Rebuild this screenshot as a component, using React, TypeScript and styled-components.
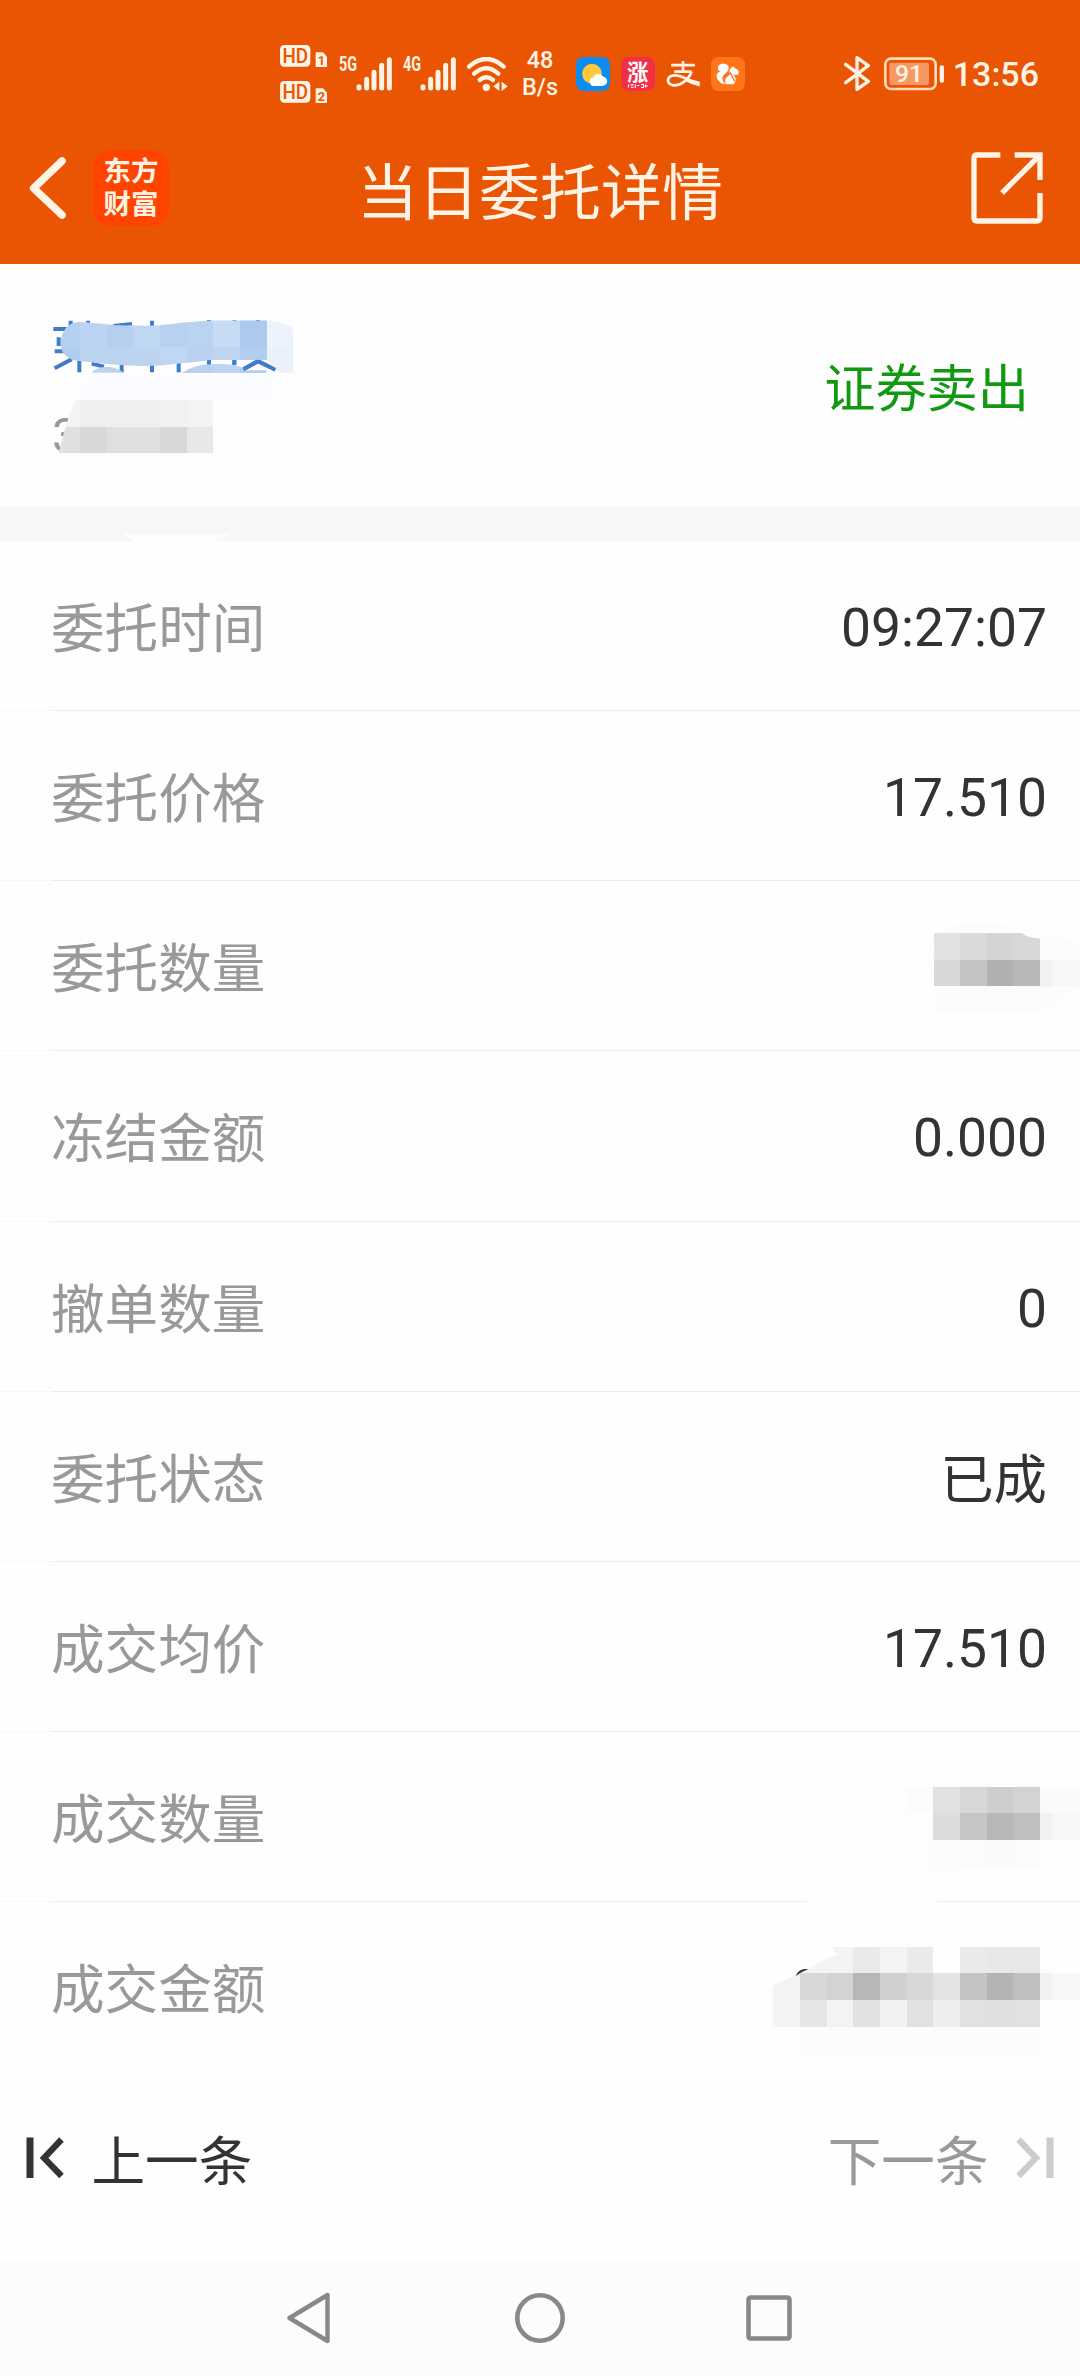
import React from 'react';
import styled, { createGlobalStyle } from 'styled-components';

const ORANGE = '#ea5504';
const CREAM = '#fff3e6';
const PAPER = '#fefefe';
const INK = '#333333';
const MUTED = '#999999';
const FONT = `Roboto, 'Noto Sans CJK SC', sans-serif`;

const GlobalStyle = createGlobalStyle`
  body {
    margin: 0;
    background: ${PAPER};
    font-family: ${FONT};
  }

  svg {
    display: block;
    flex: none;
  }
`;

const Screen = styled.main`
  display: flex;
  flex-direction: column;
  width: 1080px;
  height: 2376px;
  overflow: hidden;
  background: ${PAPER};
`;

const TopArea = styled.header`
  height: 264px;
  background: ${ORANGE};
  color: ${CREAM};
`;

const StatusBar = styled.div`
  display: flex;
  align-items: center;
  box-sizing: border-box;
  height: 112px;
  padding: 35px 41px 0 280px;
`;

const StatusGroup = styled.div<{ $gap: number; $before?: number }>`
  display: flex;
  align-items: center;
  gap: ${(props) => props.$gap}px;
  margin-left: ${(props) => props.$before || 0}px;
`;

const NetSpeed = styled.div`
  width: 36px;
  margin-left: 14px;
  font-size: 23.5px;
  font-weight: 500;
  line-height: 27px;
  text-align: center;
`;

const Clock = styled.div`
  margin-left: auto;
  font-size: 34px;
  font-weight: 500;
  line-height: 34px;
`;

const TitleBar = styled.div`
  display: grid;
  grid-template-columns: 300px 1fr 300px;
  align-items: center;
  height: 152px;
`;

const TitleStart = styled.div`
  display: flex;
  align-items: center;
  gap: 26px;
  padding-left: 29px;
`;

const TitleEnd = styled.div`
  display: flex;
  justify-content: flex-end;
  padding-right: 37px;
`;

const Title = styled.h1`
  margin: 0;
  padding-top: 11px;
  font-size: 61px;
  font-weight: 400;
  line-height: 80px;
  text-align: center;
  white-space: nowrap;
`;

const BrandLogo = styled.div`
  display: flex;
  flex-direction: column;
  justify-content: center;
  width: 76px;
  height: 76px;
  border-radius: 17px;
  background: #ff4400;
  font-size: 27.5px;
  font-weight: 700;
  line-height: 33px;
  text-align: center;
`;

const Summary = styled.section`
  position: relative;
  display: flex;
  justify-content: space-between;
  align-items: center;
  box-sizing: border-box;
  height: 243px;
  padding: 0 51px 0 52px;
`;

const StockCode = styled.div`
  padding-top: 101px;
  color: ${MUTED};
  font-size: 48px;
  line-height: 56px;
`;

const TradeSide = styled.div`
  padding-top: 9px;
  color: #119a11;
  font-size: 51.2px;
  line-height: 70px;
`;

const Band = styled.div`
  height: 34px;
  background: #f6f7f9;
`;

const Row = styled.div`
  position: relative;
  display: flex;
  justify-content: space-between;
  align-items: center;
  box-sizing: border-box;
  height: 170.14px;
  padding: 3px 33px 0 51px;
  background: linear-gradient(to right, #f7f7f7 52px, #ececec 52px) bottom / 100%
    1px no-repeat;

  &:last-child {
    background: none;
  }
`;

const RowLabel = styled.span`
  padding-top: 5px;
  color: ${MUTED};
  font-size: 53.6px;
  line-height: 74px;
`;

const RowValue = styled.span<{ $cjk?: boolean }>`
  padding-top: ${(props) => (props.$cjk ? 6 : 1)}px;
  color: ${INK};
  font-size: 53.4px;
  line-height: 74px;
`;

// masks lie over the text that they hide
const MaskLayer = styled.svg<{ $top: number; $side: 'left' | 'right' }>`
  position: absolute;
  z-index: 1;
  top: ${(props) => props.$top}px;
  ${(props) => props.$side}: 0;
`;

const Pager = styled.div`
  display: flex;
  flex: 1;
  justify-content: space-between;
  align-items: center;
  padding: 0 26px 16px;
`;

const PagerButton = styled.div<{ $disabled?: boolean }>`
  display: flex;
  align-items: center;
  gap: 26.5px;
  color: ${(props) => (props.$disabled ? MUTED : INK)};
  font-size: 53.6px;
  line-height: 74px;

  span {
    padding-top: 9px;
  }
`;

const NavBar = styled.nav`
  display: flex;
  justify-content: center;
  align-items: center;
  gap: 179px;
  height: 116px;
  background: #fcfcfc;
`;

const HdIcon = () => (
  <svg width="48" height="58" viewBox="0 0 144 174">
    {[0, 108].map((y, i) => (
      <g key={y} transform={`translate(0 ${y})`}>
        <rect width="91" height="65" rx="13" fill={CREAM} />
        <text
          x="46"
          y="54"
          fill={ORANGE}
          fontSize="58"
          fontWeight="500"
          textAnchor="middle"
          textLength="77"
          lengthAdjust="spacingAndGlyphs"
        >
          HD
        </text>
        <path d="M107 22h22l12 13v31h-34z" fill={CREAM} />
        <text
          x="124"
          y="61"
          fill={ORANGE}
          fontSize="38"
          fontWeight="700"
          textAnchor="middle"
        >
          {i + 1}
        </text>
      </g>
    ))}
  </svg>
);

const SignalIcon = ({ label }: { label: string }) => (
  <svg width="53" height="46" viewBox="0 -18 159 138">
    <text
      x="0"
      y="43"
      fill={CREAM}
      fontSize="58"
      fontWeight="700"
      textLength="54"
      lengthAdjust="spacingAndGlyphs"
    >
      {label}
    </text>
    <g stroke={CREAM} strokeWidth="15" strokeLinecap="round">
      <path d="M60 89v4M83 67v26M105 46v47M128 25v68M151 8v85" />
    </g>
  </svg>
);

const WifiIcon = () => (
  <svg width="41" height="34" viewBox="0 0 123 102">
    <g fill="none" stroke={CREAM} strokeWidth="13" strokeLinecap="round">
      <path d="M6 29Q58-17 110 29" />
      <path d="M21 50Q58 17 94 50" />
      <path d="M38 69Q58 53 78 69" />
    </g>
    <circle cx="58" cy="91" r="11" fill={CREAM} />
    <path d="M97 74v28L79 88zM104 74v28l18-14z" fill={CREAM} />
  </svg>
);

const WeatherIcon = () => (
  <svg width="34" height="34" viewBox="0 0 100 100">
    <rect width="100" height="100" rx="22" fill="#0d8cf0" />
    <circle cx="47" cy="49" r="29" fill="#ffc83d" />
    <path
      d="M50 85a13 13 0 0 1 0-25 17 17 0 0 1 29-3 14 14 0 0 1-3 28z"
      fill="#fff"
    />
  </svg>
);

const RisingIcon = () => (
  <svg width="34" height="34" viewBox="0 0 100 100">
    <rect width="100" height="100" rx="24" fill="#f22f46" />
    <text
      x="49"
      y="68"
      fill="#fff"
      fontSize="63"
      fontWeight="700"
      textAnchor="middle"
    >
      涨
    </text>
    <path
      d="M22 80v10M28 82h9M29 89h8M42 80v11M47 84h7M59 81h7v9h-7M72 81v9M70 85h9"
      stroke="#fff"
      strokeWidth="3"
      fill="none"
    />
  </svg>
);

const AlipayIcon = () => (
  <svg width="34" height="34" viewBox="0 0 100 100">
    <g fill="none" stroke={CREAM} strokeWidth="8">
      <path d="M15 24H85M50 12V42M24 43H75" />
      <path d="M75 42C68 67 41 86 20 83C-1 79 2 55 25 54C48 53 70 72 98 79" />
    </g>
    <path d="M62 62Q80 69 99 72V87Q76 82 54 69z" fill={CREAM} />
  </svg>
);

const SquirrelIcon = () => (
  <svg width="34" height="34" viewBox="0 0 100 100">
    <rect width="100" height="100" rx="22" fill="#ff7517" />
    <path
      d="M32 79C10 63 14 45 28 43C14 36 20 19 37 19C55 20 57 38 43 48C31 57 30 68 42 79z"
      fill="#fff"
    />
    <path
      d="M59 32L65 27L70 33C82 36 84 46 79 52L66 53C75 61 74 73 67 80H43C38 65 46 56 55 49C53 41 55 37 59 32z"
      fill="#fff"
    />
    <path d="M43 60L57 47L70 72" fill="none" stroke="#ff7517" strokeWidth="4" />
  </svg>
);

const BluetoothIcon = () => (
  <svg width="27" height="35" viewBox="0 0 81 105">
    <path
      d="M5 25L73 76L39 100V5L73 29L5 80"
      fill="none"
      stroke={CREAM}
      strokeWidth="10"
      strokeLinecap="round"
      strokeLinejoin="round"
    />
  </svg>
);

const BatteryIcon = () => (
  <svg width="60" height="34" viewBox="0 0 180 102">
    <rect
      x="4"
      y="5"
      width="151"
      height="91"
      rx="17"
      fill="none"
      stroke="#ffd9b8"
      strokeWidth="8"
    />
    <rect x="16" y="17" width="119" height="67" rx="5" fill="#f69863" />
    <text
      x="75"
      y="75"
      fill={CREAM}
      fontSize="74"
      fontWeight="500"
      textAnchor="middle"
    >
      91
    </text>
    <rect x="167" y="25" width="13" height="52" rx="6" fill={CREAM} />
  </svg>
);

const BackIcon = () => (
  <svg width="38" height="64" viewBox="0 0 114 192">
    <path
      d="M99 15L14 97L99 177"
      fill="none"
      stroke={CREAM}
      strokeWidth="23"
      strokeLinecap="round"
      strokeLinejoin="round"
    />
  </svg>
);

const ShareIcon = () => (
  <svg width="72" height="72" viewBox="0 0 216 216">
    <g fill="none" stroke={CREAM} strokeWidth="16">
      <path d="M88 9H18Q9 9 9 18V198Q9 207 18 207H198Q207 207 207 198V123" />
      <path d="M131 9H207V84M204 12L93 123" />
    </g>
  </svg>
);

const SkipIcon = ({ color, flip }: { color: string; flip?: boolean }) => (
  <svg width="39" height="42" viewBox="0 0 39 42">
    <g
      transform={flip ? 'translate(39 0) scale(-1 1)' : undefined}
      fill="none"
      stroke={color}
    >
      <path d="M4 0.5V41" strokeWidth="7" />
      <path d="M35.500 2.500L18 21L35.500 39" strokeWidth="6.200" />
    </g>
  </svg>
);

const CELL = 80;

interface MosaicProps {
  x: number;
  y: number;
  rows: string[][];
}

const Mosaic = ({ x, y, rows }: MosaicProps) => (
  <g shapeRendering="crispEdges">
    {rows.map((row, r) =>
      row.map((fill, c) => (
        <rect
          key={`${r}-${c}`}
          x={x + c * CELL}
          y={y + r * CELL}
          width={CELL}
          height={CELL}
          fill={fill}
        />
      ))
    )}
  </g>
);

const nameCells = [
  ['#b5cff0', '#bbd4f3', '#b5cff0', '#c0d7f4', '#b7d1f0', '#b9d3f0', '#c7dcf3', '#adcaee', '#edf3fc'],
  ['#b0ccef', '#bdd4f1', '#bdd4f1', '#bdd4f1', '#c0d7f4', '#bad2f0', '#bed5f1', '#b2ceee', '#eaf1fb'],
];

const codeCells = [
  ['#f3f3f3', '#efefef', '#efefef', '#efefef', '#f1f1f1', '#f4f4f4'],
  ['#e0e0e0', '#d8d8d8', '#dfdfdf', '#e0e0e0', '#d8d8d8', '#e8e8e8'],
];

const orderCells = [
  ['#e2e2e2', '#dadada', '#d4d4d4', '#d7d7d7'],
  ['#d8d8d8', '#c3c3c3', '#b0b0b0', '#b8b8b8'],
  ['#fcfcfc', '#fbfbfb', '#fbfbfb', '#fbfbfb'],
];

const dealCells = [
  ['#fbfbfb', '#e1e1e1', '#d7d7d7', '#cecece', '#d3d3d3'],
  ['#fdfdfd', '#dcdcdc', '#c6c6c6', '#b7b7b7', '#bfbfbf'],
  ['#fdfdfd', '#fcfcfc', '#fbfbfb', '#fafafa', '#fbfbfb'],
];

const amountCells = [
  ['#fdfdfd', '#f3f3f3', '#f3f3f3', '#eaeaea', '#f3f3f3', '#eaeaea', '#fdfdfd', '#eaeaea', '#e8e8e8', '#e8e8e8'],
  ['#f3f3f3', '#d8d8d8', '#d3d3d3', '#b7b7b7', '#d0d0d0', '#d8d8d8', '#e3e3e3', '#c4c4c4', '#b4b4b4', '#bfbfbf'],
  ['#f3f3f3', '#e6e6e6', '#f3f3f3', '#e2e2e2', '#f2f2f2', '#e1e1e1', '#eeeeee', '#e1e1e1', '#e0e0e0', '#e1e1e1'],
];

const NameMask = () => (
  <MaskLayer $top={26} $side="left" width="360" height="260" viewBox="0 0 1080 780">
    <defs>
      <clipPath id="name-mask">
        <path d="M182 165C182 120 205 97 240 96C300 98 330 108 400 106C480 110 520 100 560 97C600 95 620 91 650 91H800C835 92 870 105 880 118V248H838L800 210H640C560 217 500 228 420 228C330 226 290 217 240 214C205 210 182 190 182 165z" />
        <path d="M275 248C290 225 350 225 370 248zM545 248C590 222 620 222 660 222C700 222 720 228 740 241H800V250H545z" />
      </clipPath>
      <clipPath id="code-mask">
        <path d="M225 330H640V490H176C190 430 205 380 225 330z" />
      </clipPath>
    </defs>
    <path
      d="M275 248H800Q1030 170 1030 260Q1010 340 820 370Q1000 420 1002 540Q990 640 880 650H190Q150 620 160 500L176 490z"
      fill="#fdfdfd"
    />
    <path d="M275 250H800V330H225z" fill="#fafcff" />
    <g stroke="#3f7dca" strokeWidth="12" fill="none">
      <path d="M160 117H200M176 142V168M164 184H195M164 235L215 208" />
      <path d="M212 92V110M264 92V110M238 205V247M275 221L312 230" />
      <path d="M340 108L396 102M365 225V247M456 92V112M456 220V247M536 218V247" />
      <path d="M627 90V98M627 210V226M703 90V98M703 210V226M774 90V98" />
      <path d="M730 238L774 213L826 239" />
    </g>
    <g clipPath="url(#name-mask)">
      <Mosaic x={160} y={90} rows={nameCells} />
    </g>
    <g stroke="#3f7dca" strokeWidth="11" fill="none">
      <path d="M730 238L774 215L826 239M627 211V223M703 211V223" />
    </g>
    <g clipPath="url(#code-mask)">
      <Mosaic x={160} y={330} rows={codeCells} />
    </g>
    <path d="M370 731H692Q620 765 510 774Q400 765 370 731z" fill="#fcfdfd" />
  </MaskLayer>
);

const OrderMask = () => (
  <MaskLayer $top={39} $side="right" width="160" height="113" viewBox="480 1080 480 340">
    <path d="M500 1200Q500 1110 600 1090H720L840 1135H910Q945 1140 960 1170V1280L840 1360H560Q520 1350 520 1280z" fill="#fcfcfc" />
    <path d="M840 1200H960V1280H840z" fill="#f7f7f7" />
    <path d="M840 1200H876V1280H840z" fill="#f2f2f2" />
    <Mosaic x={520} y={1120} rows={orderCells} />
    <path d="M785 1118Q800 1133 841 1136V1118z" fill="#fdfdfd" />
  </MaskLayer>
);

const DealMask = () => (
  <MaskLayer $top={8} $side="right" width="400" height="320" viewBox="0 0 1200 960">
    <path d="M300 260Q340 225 470 185L600 175L680 140L860 65L1080 40L1200 20V330L1080 380L860 460L770 486L680 520L540 528L440 600L380 490z" fill="#fdfdfd" />
    <path d="M120 830Q140 760 280 735L470 645L760 570L860 540H1040L1080 625L1200 640V930H200Q130 910 120 830z" fill="#fdfdfd" />
    <path d="M1080 140H1200V220H1080z" fill="#fafafa" />
    <path d="M1080 220H1200V300H1080zM1080 700H1200V780H1080z" fill="#f7f7f7" />
    <path d="M1080 220H1116V300H1080zM1080 700H1116V780H1080z" fill="#f1f1f1" />
    <Mosaic x={680} y={140} rows={dealCells} />
    <path d="M280 860H1080V940H360V860z" fill="#fcfcfc" />
    <Mosaic x={280} y={620} rows={amountCells} />
    <path d="M278 618H455L471 645Q430 655 385 688L278 738z" fill={PAPER} />
    <path d="M347 708Q358 682 385 688Q365 695 347 708z" fill={INK} />
  </MaskLayer>
);

interface Detail {
  label: string;
  value?: string;
  cjk?: boolean;
  mask?: React.ReactNode;
}

const details: Detail[] = [
  { label: '委托时间', value: '09:27:07' },
  { label: '委托价格', value: '17.510' },
  { label: '委托数量', mask: <OrderMask /> },
  { label: '冻结金额', value: '0.000' },
  { label: '撤单数量', value: '0' },
  { label: '委托状态', value: '已成', cjk: true },
  { label: '成交均价', value: '17.510' },
  { label: '成交数量', mask: <DealMask /> },
  { label: '成交金额' },
];

const App = () => (
  <Screen>
    <GlobalStyle />
    <TopArea>
      <StatusBar>
        <HdIcon />
        <StatusGroup $gap={11} $before={11}>
          <SignalIcon label="5G" />
          <SignalIcon label="4G" />
          <WifiIcon />
        </StatusGroup>
        <NetSpeed>
          48
          <br />
          B/s
        </NetSpeed>
        <StatusGroup $gap={11} $before={18}>
          <WeatherIcon />
          <RisingIcon />
          <AlipayIcon />
          <SquirrelIcon />
        </StatusGroup>
        <StatusGroup $gap={13} $before={99}>
          <BluetoothIcon />
          <BatteryIcon />
        </StatusGroup>
        <Clock>13:56</Clock>
      </StatusBar>
      <TitleBar>
        <TitleStart>
          <BackIcon />
          <BrandLogo>
            <span>东方</span>
            <span>财富</span>
          </BrandLogo>
        </TitleStart>
        <Title>当日委托详情</Title>
        <TitleEnd>
          <ShareIcon />
        </TitleEnd>
      </TitleBar>
    </TopArea>

    <Summary>
      <StockCode>3</StockCode>
      <TradeSide>证券卖出</TradeSide>
      <NameMask />
    </Summary>
    <Band />

    <div>
      {details.map(({ label, value, cjk, mask }) => (
        <Row key={label}>
          <RowLabel>{label}</RowLabel>
          {value && <RowValue $cjk={cjk}>{value}</RowValue>}
          {mask}
        </Row>
      ))}
    </div>

    <Pager>
      <PagerButton>
        <SkipIcon color={INK} />
        <span>上一条</span>
      </PagerButton>
      <PagerButton $disabled>
        <span>下一条</span>
        <SkipIcon color="#cccccc" flip />
      </PagerButton>
    </Pager>

    <NavBar>
      <svg width="48" height="52" viewBox="0 0 48 52">
        <path
          d="M40.500 3V49L2.500 26z"
          fill="none"
          stroke="#888"
          strokeWidth="4.400"
          strokeLinejoin="round"
        />
      </svg>
      <svg width="52" height="52" viewBox="0 0 52 52">
        <circle cx="26" cy="26" r="22.700" fill="none" stroke="#888" strokeWidth="4.600" />
      </svg>
      <svg width="48" height="52" viewBox="0 0 48 52">
        <rect
          x="3.500"
          y="5.500"
          width="41"
          height="41"
          rx="2"
          fill="none"
          stroke="#888"
          strokeWidth="4.600"
        />
      </svg>
    </NavBar>
  </Screen>
);

export default App;
